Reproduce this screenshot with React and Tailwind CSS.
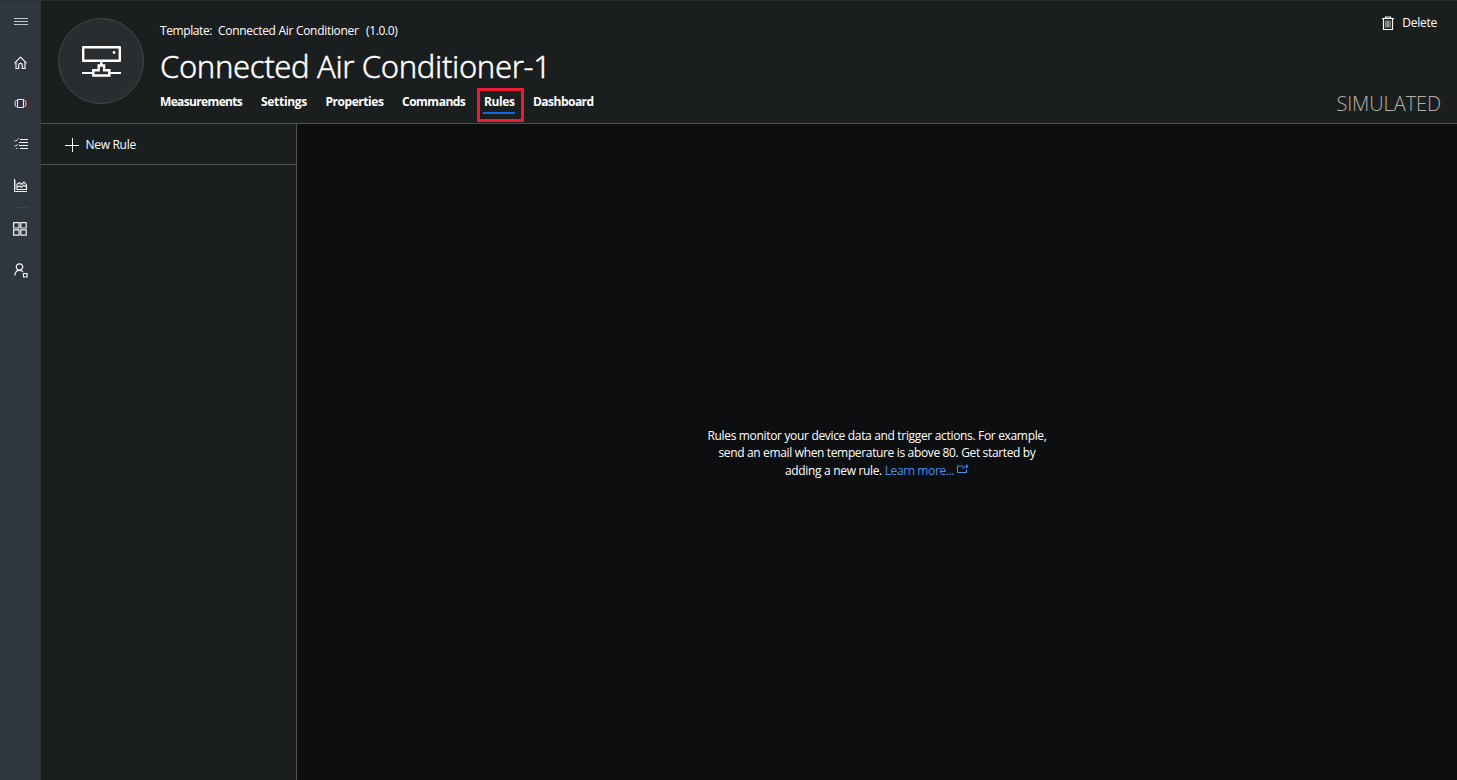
const stroke = { fill: "none", stroke: "currentColor" };

function MenuIcon() {
  return (
    <svg width="14" height="8" viewBox="0 0 14 8" {...stroke} stroke="#c3c5c8" shapeRendering="crispEdges">
      <path d="M0 .5h14M0 3.5h14M0 6.5h14" />
    </svg>
  );
}

function HomeIcon() {
  return (
    <svg width="14" height="14" viewBox="0 0 14 14" {...stroke} strokeWidth="1.2">
      <path d="M.6 7.2 6.500 1.2l6 6M2 5.8v6.700h2.700V8.9c0-1 .7-1.5 1.8-1.5s1.8.5 1.8 1.5v3.600H11V5.8" />
    </svg>
  );
}

function DeviceIcon() {
  return (
    <svg width="14" height="10" viewBox="0 0 14 10" {...stroke}>
      <path d="M3.500 .5h6v8h-6z" />
      <path stroke="#d88a93" d="M10 1.500h1.500v6H10" />
      <path stroke="#a99adf" d="M3 1.500H1.500v6H3" />
      <path stroke="#7b78c8" d="M.5 2.500v4" />
      <path stroke="#a8646c" d="M12.500 2.500v4" />
    </svg>
  );
}

function ChecklistIcon() {
  return (
    <svg width="14" height="12" viewBox="0 0 14 12" {...stroke}>
      <path d="M6 1.500h8M5 4.500h9M5 7.500h9M6 10.500h8" />
      <path strokeWidth=".9" d="m.5 2 1.200 1.300L4.500.5M.5 7l1.200 1.300 2.300-2.300" />
      <path strokeWidth=".8" d="M2 10.500h1.500" />
    </svg>
  );
}

function ChartIcon() {
  return (
    <svg width="14" height="13" viewBox="0 0 14 13" {...stroke}>
      <path d="M.5 0v12.500H13" stroke="#e6f3f5" />
      <path stroke="#62c4d8" d="M1.500 1v10" strokeWidth=".7" />
      <path strokeWidth="1.100" d="M3 10.500V5.300l2.300-1.600 2 1.800L10 3l2.500 3v4.500zM3 8.300l2.500-1.300 2 1.300 2.200-2L12.500 8" />
    </svg>
  );
}

function GridIcon() {
  return (
    <svg width="14" height="14" viewBox="0 0 14 14" {...stroke} strokeWidth="1.200">
      <path d="M.6.6h5.400v5.400H.6zM7.800 .6h5.400v5.400H7.800zM.6 7.800h5.400v5.400H.6zM7.800 7.800h5.400v5.400H7.800z" />
    </svg>
  );
}

function UserIcon() {
  return (
    <svg width="14" height="15" viewBox="0 0 14 15" {...stroke} strokeWidth="1.200">
      <circle cx="5.500" cy="4" r="3.200" />
      <path d="M.8 12.500C1 9.300 2.800 7.300 5.500 7.300c1.600 0 2.800.6 3.600 1.700M9.500 10.500H13V14H9.500z" />
    </svg>
  );
}

function DeviceBadgeIcon() {
  return (
    <svg width="39" height="31" viewBox="0 0 39 31" {...stroke} strokeWidth="2">
      <path strokeWidth="2.400" strokeLinejoin="round" d="M1.200 1.200h36.600v13.600H1.200z" />
      <circle cx="32" cy="6.500" r="1.400" fill="currentColor" stroke="none" />
      <path strokeWidth="2.600" d="M19.300 15v4" />
      <path d="M0 27h11M28 27h11" />
      <path strokeWidth="2.400" d="M16.700 19.500h5.400v4.800h5.200v5.200h-16v-5.200h5.400z" />
    </svg>
  );
}

function TrashIcon() {
  return (
    <svg width="12" height="15" viewBox="0 0 12 15" {...stroke}>
      <path d="M0 2.500h12M3.500 2.500v-1.500h5v1.500M1.500 2.500v11h9v-11" strokeWidth="1.200" />
      <path d="M4 4.500v7" stroke="#bff1f8" />
      <path d="M6 4.500v7" />
      <path d="M8 4.500v7" stroke="#e8bd98" />
    </svg>
  );
}

function PlusIcon() {
  return (
    <svg width="14" height="14" viewBox="0 0 14 14" {...stroke} shapeRendering="crispEdges">
      <path d="M0 7.500h14M7.500 0v14" />
    </svg>
  );
}

function ExternalIcon() {
  return (
    <svg width="12" height="10" viewBox="0 0 12 10" {...stroke} className="ml-[3px] inline-block align-[1px]">
      <path d="M6.500 2H.5v6.500h9V5.500M5.500 5C6 3.200 7.500 2.300 11 2.300M9 .3l2.200 2L9 4.300" />
    </svg>
  );
}

const navTop = [
  { id: "menu", Icon: MenuIcon, cls: "h-[42px]" },
  { id: "home", Icon: HomeIcon, cls: "h-10" },
  { id: "devices", Icon: DeviceIcon, cls: "h-[41px]" },
  { id: "jobs", Icon: ChecklistIcon, cls: "h-10" },
  { id: "analytics", Icon: ChartIcon, cls: "h-[43px]" },
];

const tabs = [
  { label: "Measurements", cls: "w-[101px] tracking-[-0.65px]" },
  { label: "Settings", cls: "w-[64.500px] tracking-[-0.3px]" },
  { label: "Properties", cls: "w-[76.500px] tracking-[-0.45px]" },
  { label: "Commands", cls: "w-[82px] tracking-[-0.5px]" },
  { label: "Rules", cls: "w-[49px] tracking-[-0.4px]", active: true },
  { label: "Dashboard", cls: "tracking-[-0.52px]" },
];

function Tab({ label, cls, active }) {
  return (
    <div className={"relative " + cls}>
      {label}
      {active && (
        <>
          <span className="absolute top-[18px] -left-px h-0.5 w-8 bg-[#1464e6]" />
          <span className="absolute -top-[6px] -left-[7px] h-[34px] w-[47px] border-3 border-[#ed1b34]" />
        </>
      )}
    </div>
  );
}

export default function App() {
  return (
    <div className="flex h-screen overflow-hidden bg-[#0d0e10] font-['Open_Sans','Noto_Sans',sans-serif] text-xs leading-4 text-white">
      <nav className="flex w-[41px] shrink-0 flex-col border-t border-[#2b3036] bg-[#30363e] pl-px text-[#f0f1f2]">
        {navTop.map(({ id, Icon, cls }) => (
          <button key={id} className={"flex shrink-0 items-center justify-center " + cls}>
            <Icon />
          </button>
        ))}
        <div className="mx-auto h-px w-[13px] shrink-0 bg-[#44454a]" />
        <button className="mr-0.5 flex h-[42px] shrink-0 items-center justify-center">
          <GridIcon />
        </button>
        <button className="flex h-[41px] shrink-0 items-center justify-center">
          <UserIcon />
        </button>
      </nav>

      <div className="flex min-w-0 flex-1 flex-col">
        <header className="flex h-[124px] shrink-0 border-t border-b border-t-[#292e2f] border-b-[#505152] bg-[#1b1e1f]">
          <div className="mt-[17px] ml-[17px] flex size-[86px] shrink-0 items-center justify-center rounded-full border border-[#454849] bg-[#2a2d2f] pt-px pl-px">
            <DeviceBadgeIcon />
          </div>
          <div className="ml-4 flex-1 pt-[22px]">
            <div className="flex whitespace-pre">
              <span className="w-[58px] tracking-[-0.4px]">Template:</span>
              <span className="w-[148px] tracking-[-0.3px]">Connected Air Conditioner</span>
              <span className="tracking-[-0.35px]">(1.0.0)</span>
            </div>
            <h1 className="mt-[7px] font-['Noto_Sans',sans-serif] text-[31px] leading-10 font-light tracking-[-0.37px] [-webkit-text-stroke:0.4px_white]">Connected Air Conditioner-1</h1>
            <div className="mt-2 flex font-bold">
              {tabs.map((t) => (
                <Tab key={t.label} {...t} />
              ))}
            </div>
          </div>
          <div className="flex flex-col items-end justify-between pt-[14px] pr-4">
            <button className="mr-1 flex items-center tracking-[-0.25px]">
              <TrashIcon />
              <span className="ml-2">Delete</span>
            </button>
            <div className="mb-[5px] text-xl leading-7 font-light tracking-[-0.1px] text-[#b5aea6]">SIMULATED</div>
          </div>
        </header>

        <div className="flex min-h-0 flex-1">
          <aside className="w-64 shrink-0 border-r border-[#505152] bg-[#1b1e1f]">
            <button className="flex h-[41px] w-full items-center border-b border-[#505152] pt-px pl-6 tracking-[-0.3px]">
              <PlusIcon />
              <span className="ml-[6.500px]">New Rule</span>
            </button>
          </aside>
          <main className="flex flex-1 flex-col items-center pt-[303px] text-center leading-[17px] whitespace-nowrap">
            <p className="tracking-[-0.33px]">Rules monitor your device data and trigger actions. For example,</p>
            <p className="tracking-[-0.35px]">send an email when temperature is above 80. Get started by</p>
            <p className="mt-px tracking-[-0.33px]">
              adding a new rule. <a className="tracking-[-0.4px] text-[#4494f0]">Learn more...<ExternalIcon /></a>
            </p>
          </main>
        </div>
      </div>
    </div>
  );
}
